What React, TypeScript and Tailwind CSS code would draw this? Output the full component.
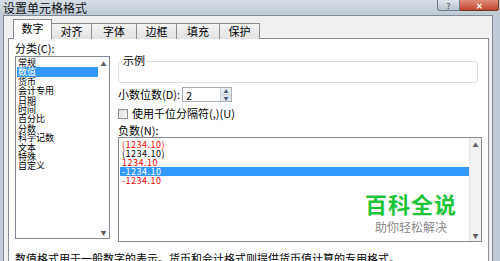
import React from 'react'

const categories = ['常规', '数值', '货币', '会计专用', '日期', '时间', '百分比', '分数', '科学记数', '文本', '特殊', '自定义']

const negatives = [
  { text: '(1234.10)', red: true },
  { text: '(1234.10)', red: false },
  { text: '1234.10', red: true },
  { text: '-1234.10', red: false, selected: true },
  { text: '-1234.10', red: true },
]

const tabs = [
  { label: '对齐', w: 'w-[40px]' },
  { label: '字体', w: 'w-[45px]' },
  { label: '边框', w: 'w-[40px]' },
  { label: '填充', w: 'w-[43px]' },
  { label: '保护', w: 'w-[40px]' },
]

const font = { fontFamily: '"Noto Sans CJK SC", "Noto Sans", sans-serif' }

const ScrollBar = ({ className }: { className: string }) => (
  <div className={`flex flex-col justify-between items-center ${className}`}>
    <span className="text-[6px] leading-[8px] text-[#606060] pt-[3px]">▲</span>
    <span className="text-[6px] leading-[8px] text-[#606060] pb-[1px]">▼</span>
  </div>
)

export default function App() {
  return (
    <div className="w-[500px] h-[261px] overflow-hidden bg-[#c3ccd6] flex flex-col text-[11px] text-black" style={font}>
      {/* title bar */}
      <div className="h-[17px] flex justify-between items-start bg-gradient-to-b from-[#d6dde5] to-[#bfc9d3]">
        <div className="pl-[3px] pt-[1px] text-[12px] leading-[14px] text-[#111]">设置单元格格式</div>
        <div className="flex mr-[1px]">
          <div className="w-[23px] h-[11px] rounded-bl-[3px] border border-t-0 border-[#6d7a88] bg-gradient-to-b from-[#dfe5ea] to-[#b8c2cc] flex justify-center items-center text-[8px] leading-[9px] text-[#333]">?</div>
          <div className="w-[39px] h-[11px] rounded-br-[3px] border border-t-0 border-l-0 border-[#6d3a2e] bg-gradient-to-b from-[#e08c78] to-[#c0432c] flex justify-center items-center text-[8px] leading-[9px] font-bold text-white">✕</div>
        </div>
      </div>

      {/* dialog body */}
      <div className="flex-1 ml-[3px] mr-[7px] border-l border-r border-t border-[#7f8a96] bg-[#f0f0f0] flex flex-col pl-[4px] pr-[3px] pt-[3px]">
        {/* tabs */}
        <div className="flex items-end pl-[5px] h-[20px] relative z-10">
          <div className="w-[39px] h-[20px] bg-white border border-b-0 border-[#898c95] flex justify-center pt-[2px] leading-[13px]">数字</div>
          {tabs.map((t) => (
            <div key={t.label} className={`${t.w} h-[16px] border border-l-0 border-b-0 border-[#898c95] bg-gradient-to-b from-[#f4f4f4] to-[#e2e2e2] flex justify-center leading-[14px]`}>
              {t.label}
            </div>
          ))}
        </div>

        {/* panel */}
        <div className="flex-1 -mt-px bg-white border border-[#898c95] px-[6px] pt-[3px] flex flex-col">
          <div className="flex gap-[8px]">
            {/* left column */}
            <div className="w-[95px] flex flex-col">
              <div className="h-[14px] leading-[12px]">分类(C):</div>
              <div className="h-[183px] border border-[#828790] flex">
                <div className="flex-1 flex flex-col pt-[1px] pl-[1px] text-[9px]">
                  {categories.map((c, i) => (
                    <div
                      key={c}
                      className={`h-[9.4px] leading-[9.4px] pl-[1px] ${i === 1 ? 'bg-[#3399ff] text-white' : ''}`}
                    >
                      {c}
                    </div>
                  ))}
                </div>
                <ScrollBar className="w-[11px] bg-white" />
              </div>
            </div>

            {/* right column */}
            <div className="flex-1 flex flex-col">
              <div className="relative mt-[19px] h-[22px] border border-[#d5dfe5] rounded-[3px] mr-[4px]">
                <span className="absolute -top-[8px] left-[3px] bg-white px-[1px] leading-[12px]">示例</span>
              </div>
              <div className="flex items-center mt-[4px] h-[15px]">
                <span className="w-[64px]">小数位数(D):</span>
                <div className="w-[50px] h-[15px] border border-[#abadb3] flex items-center">
                  <span className="flex-1 pl-[3px] leading-[12px]">2</span>
                  <div className="w-[11px] h-full flex flex-col border-l border-[#c9ced6]">
                    <div className="flex-1 flex justify-center items-center text-[5px] leading-[6px] text-[#4a6080] bg-[#e9eef5] border-b border-[#c9ced6]">▲</div>
                    <div className="flex-1 flex justify-center items-center text-[5px] leading-[6px] text-[#4a6080] bg-[#e1e7ef]">▼</div>
                  </div>
                </div>
              </div>
              <div className="flex items-center mt-[6px] h-[11px] gap-[4px]">
                <div className="w-[10px] h-[10px] border border-[#8f8f8f] bg-gradient-to-br from-[#dcdcdc] to-[#f8f8f8]"></div>
                <span className="leading-[11px]">使用千位分隔符(,)(U)</span>
              </div>
              <div className="mt-[6px] h-[12px] leading-[11px]">负数(N):</div>
              <div className="relative h-[105px] border border-[#828790] flex">
                <div className="flex-1 flex flex-col pt-[2px] pl-[1px] text-[9px] tracking-[0.5px]">
                  {negatives.map((n, i) => (
                    <div
                      key={i}
                      className={`h-[9px] leading-[9px] pl-[2px] ${n.selected ? 'bg-[#3399ff] text-white' : n.red ? 'text-[#ff0000]' : 'text-black'}`}
                    >
                      {n.text}
                    </div>
                  ))}
                </div>
                <ScrollBar className="w-[12px] bg-[#f2f2f2] border-l border-[#e6e6e6]" />
                {/* watermark */}
                <div className="absolute left-[246px] top-[53px] flex flex-col items-center">
                  <span className="text-[22px] leading-[24px] font-bold text-[#1fc43a] tracking-[1px]">百科全说</span>
                  <span className="text-[12px] leading-[14px] text-[#8a8a8a] mt-[5px]">助你轻松解决</span>
                </div>
              </div>
            </div>
          </div>
          <div className="mt-[10px] leading-[12px] whitespace-nowrap">数值格式用于一般数字的表示。货币和会计格式则提供货币值计算的专用格式。</div>
        </div>
      </div>
    </div>
  )
}
